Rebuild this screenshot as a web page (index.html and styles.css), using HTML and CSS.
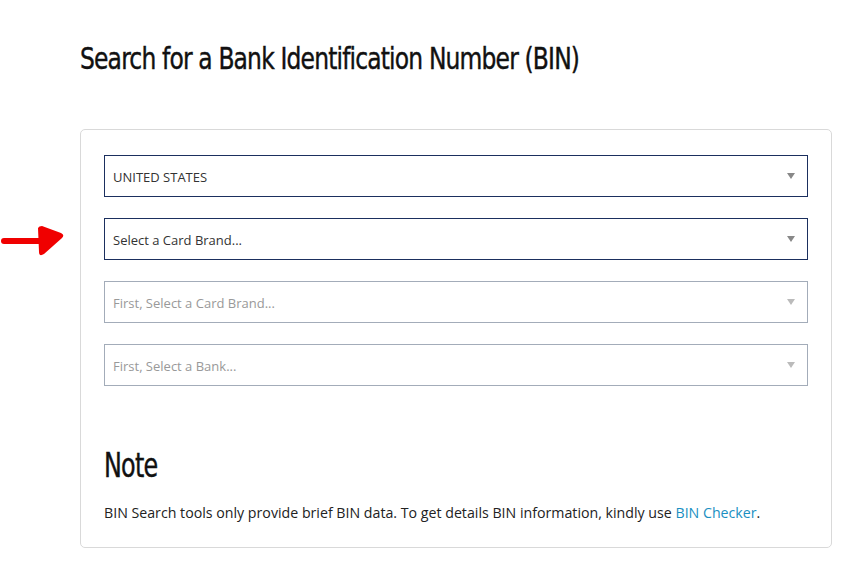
FILE: index.html
```html
<!doctype html>
<html lang="en">
<head>
    <meta charset="UTF-8">
    <meta name="viewport" content="width=device-width, initial-scale=1.0">
    <title>BIN Search</title>
    <link rel="stylesheet" href="styles.css">
</head>
<body>
    <div class="page">
        <h1 class="title">Search for a Bank Identification Number (BIN)</h1>
        <div class="search">
            <div class="search__arrow">
                <svg width="66" height="32" viewBox="0 0 66 32">
                    <path d="M4 16 L40 16" stroke="#f00000" stroke-width="6" stroke-linecap="round" fill="none"/>
                    <path d="M38 3 Q39 1 42 1 L61 8 Q65 10 62 13 L44 29 Q39 32 39 27 Z" fill="#f00000"/>
                </svg>
            </div>
            <div class="card">
                <div class="field field--active">
                    <span>UNITED STATES</span>
                    <i class="caret"></i>
                </div>
                <div class="field field--active">
                    <span>Select a Card Brand...</span>
                    <i class="caret"></i>
                </div>
                <div class="field field--disabled">
                    <span>First, Select a Card Brand...</span>
                    <i class="caret"></i>
                </div>
                <div class="field field--disabled">
                    <span>First, Select a Bank...</span>
                    <i class="caret"></i>
                </div>
                <h2 class="note__title">Note</h2>
                <p class="note__text">BIN Search tools only provide brief BIN data. To get details BIN information, kindly use <a href="#">BIN Checker</a>.</p>
            </div>
        </div>
    </div>
</body>
</html>
```

FILE: styles.css
```css
*, ::before, ::after {
    padding: 0;
    margin: 0;
    box-sizing: border-box;
}
body {
    background: #ffffff;
    font-family: 'Open Sans', sans-serif;
    color: #222222;
}
.page {
    padding: 38px 0 0 80px;
    width: 832px;
}
.title {
    font-family: 'DejaVu Sans Condensed', sans-serif;
    font-weight: normal;
    font-size: 31px;
    color: #111111;
    line-height: 40px;
    letter-spacing: -1px;
    white-space: nowrap;
    -webkit-text-stroke: 0.4px #111111;
    transform: scaleX(0.84);
    transform-origin: left center;
}
.search {
    position: relative;
    margin-top: 51px;
}
.search__arrow {
    position: absolute;
    left: -80px;
    top: 96px;
}
.card {
    border: 1px solid #d9d9d9;
    border-radius: 5px;
    padding: 25px 23px 24px;
    display: flex;
    flex-direction: column;
    gap: 21px;
}
.field {
    height: 42px;
    border: 1px solid #1b2f5e;
    padding: 0 9px 0 8px;
    display: flex;
    align-items: center;
    justify-content: space-between;
    font-size: 13px;
    color: #333333;
}
.field span {
    margin-top: 1px;
}
.field--disabled {
    border-color: #a3acb9;
    color: #999999;
}
.caret {
    width: 0;
    height: 0;
    border-left: 4px solid transparent;
    border-right: 4px solid transparent;
    border-top: 6px solid #888888;
    margin-right: 3px;
}
.field--disabled .caret {
    border-top-color: #bbbbbb;
}
.note__title {
    font-family: 'DejaVu Sans Condensed', sans-serif;
    font-weight: normal;
    font-size: 34px;
    line-height: 36px;
    color: #111111;
    margin-top: 40px;
    letter-spacing: -1px;
    -webkit-text-stroke: 0.4px #111111;
    transform: scaleX(0.78);
    transform-origin: left center;
}
.note__text {
    font-size: 14.2px;
    line-height: 20px;
    color: #222222;
    margin-top: -1px;
}
.note__text a {
    color: #1a8fc2;
    text-decoration: none;
}
```
